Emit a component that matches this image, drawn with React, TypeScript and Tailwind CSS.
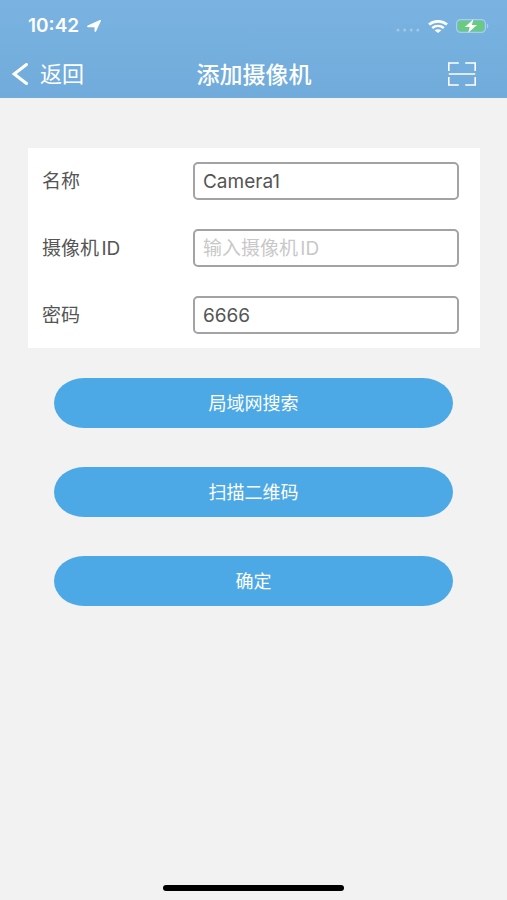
import React, { useState } from 'react';

const fields = [
  { id: 'name', label: '名称', placeholder: '', initial: 'Camera1' },
  { id: 'cameraId', label: '摄像机ID', placeholder: '输入摄像机ID', initial: '' },
  { id: 'password', label: '密码', placeholder: '', initial: '6666' },
];

const actions = ['局域网搜索', '扫描二维码', '确定'];

function StatusBar() {
  return (
    <div className="flex h-[50px] items-center justify-between pl-7 pr-[18px] pt-[2px]">
      <div className="flex items-center gap-2">
        <span className="text-[19px] leading-6 font-semibold">10:42</span>
        <svg className="h-3 w-[14px]" viewBox="0 0 14 12" fill="currentColor" aria-hidden="true">
          <path d="M13.900.9 9 11.500c-.3.600-1.500.500-1.500-.400V7.200H1C-.2 7.200-.3 5.800.7 5.400L12.900.1c.700-.3 1.300.1 1 .8Z" />
        </svg>
      </div>
      <div className="flex items-center gap-2">
        <svg className="mt-2 h-1 w-6" viewBox="0 0 24 4" fill="currentColor" opacity="0.3" aria-hidden="true">
          <circle cx="2" cy="2" r="1.5" />
          <circle cx="8.6" cy="2" r="1.5" />
          <circle cx="15.2" cy="2" r="1.5" />
          <circle cx="21.8" cy="2" r="1.5" />
        </svg>
        <svg className="h-[13px] w-5" viewBox="0 0 20 13" fill="none" stroke="currentColor" aria-hidden="true">
          <path d="M1 4.6C6 .2 14 .2 19 4.6" strokeWidth="2.7" />
          <path d="M4.200 8c3.400-2.800 8.200-2.800 11.600 0" strokeWidth="2.5" />
          <path d="M10 13 6.600 10.300c1.900-1.500 4.900-1.500 6.800 0Z" fill="currentColor" stroke="none" />
        </svg>
        <svg className="h-[14px] w-[33px]" viewBox="0 0 33 14" aria-hidden="true">
          <rect x="0.6" y="0.6" width="28.8" height="12.8" rx="4" fill="none" stroke="#a5d0e6" strokeWidth="1.2" />
          <rect x="2.2" y="2" width="25.6" height="10" rx="2" fill="#69cb7c" />
          <path d="M30.800 4.600c2 .6 2 4.200 0 4.800Z" fill="#a5d0e6" />
          <path d="M17.500.3 8.800 8h4.900l-1.500 5.700L21 6h-5.200Z" fill="#fff" />
        </svg>
      </div>
    </div>
  );
}

export default function App() {
  const [values, setValues] = useState<Record<string, string>>(
    Object.fromEntries(fields.map((f) => [f.id, f.initial]))
  );

  return (
    <div className="flex min-h-screen flex-col bg-[#f2f2f2] font-['Inter','Noto_Sans_CJK_SC',sans-serif] text-[#555555] [text-autospace:normal]">
      <header className="bg-linear-to-b from-[#7ab3e1] to-[#70abdb] text-white">
        <StatusBar />
        <nav className="grid h-12 grid-cols-3 items-center pl-3 pr-[31px]">
          <button type="button" className="flex items-center gap-3 justify-self-start text-[22px] leading-8">
            <svg className="h-[22px] w-4" viewBox="0 0 16 22" fill="none" stroke="currentColor" strokeWidth="3" aria-hidden="true">
              <path d="M14.500 1.500 2.200 11l12.300 9.500" strokeLinecap="round" />
            </svg>
            返回
          </button>
          <h1 className="justify-self-center pl-5 pt-[2px] text-[23px] leading-8 font-medium whitespace-nowrap">添加摄像机</h1>
          <button type="button" aria-label="扫描" className="justify-self-end">
            <svg className="h-6 w-7" viewBox="0 0 28 24" fill="none" stroke="currentColor" strokeWidth="1.6" aria-hidden="true">
              <path d="M.8 9V1h10M17.200 1h10v8M.8 15v8h10M17.200 23h10v-8M.8 12h26.400" />
            </svg>
          </button>
        </nav>
      </header>

      <main className="flex-1">
        <form onSubmit={(e) => e.preventDefault()}>
          <div className="ml-7 mr-[27px] mt-[50px] flex flex-col gap-[29px] bg-white py-[14px] pl-[14px] pr-[21px]">
            {fields.map((f) => (
              <div key={f.id} className="flex items-center">
                <label htmlFor={f.id} className="w-1/3 shrink-0 pt-[2px] text-[19px] leading-6">
                  {f.label}
                </label>
                <input
                  id={f.id}
                  type="text"
                  value={values[f.id]}
                  placeholder={f.placeholder}
                  onChange={(e) => setValues({ ...values, [f.id]: e.target.value })}
                  className="ml-3 h-[38px] min-w-0 flex-1 rounded-[5px] border-2 border-[#a3a3a3] bg-white px-2 text-[19px] text-[#555555] outline-none placeholder:text-[#c8c8c8]"
                />
              </div>
            ))}
          </div>

          <div className="mx-[54px] mt-[30px] flex flex-col gap-[39px]">
            {actions.map((action) => (
              <button
                key={action}
                type="button"
                className="h-[50px] rounded-[30px/25px] bg-[#4da9e6] pt-[2px] text-[18px] leading-6 text-white"
              >
                {action}
              </button>
            ))}
          </div>
        </form>
      </main>

      <div className="mx-auto mb-[9px] h-[6px] w-[181px] rounded-full bg-black" />
    </div>
  );
}
